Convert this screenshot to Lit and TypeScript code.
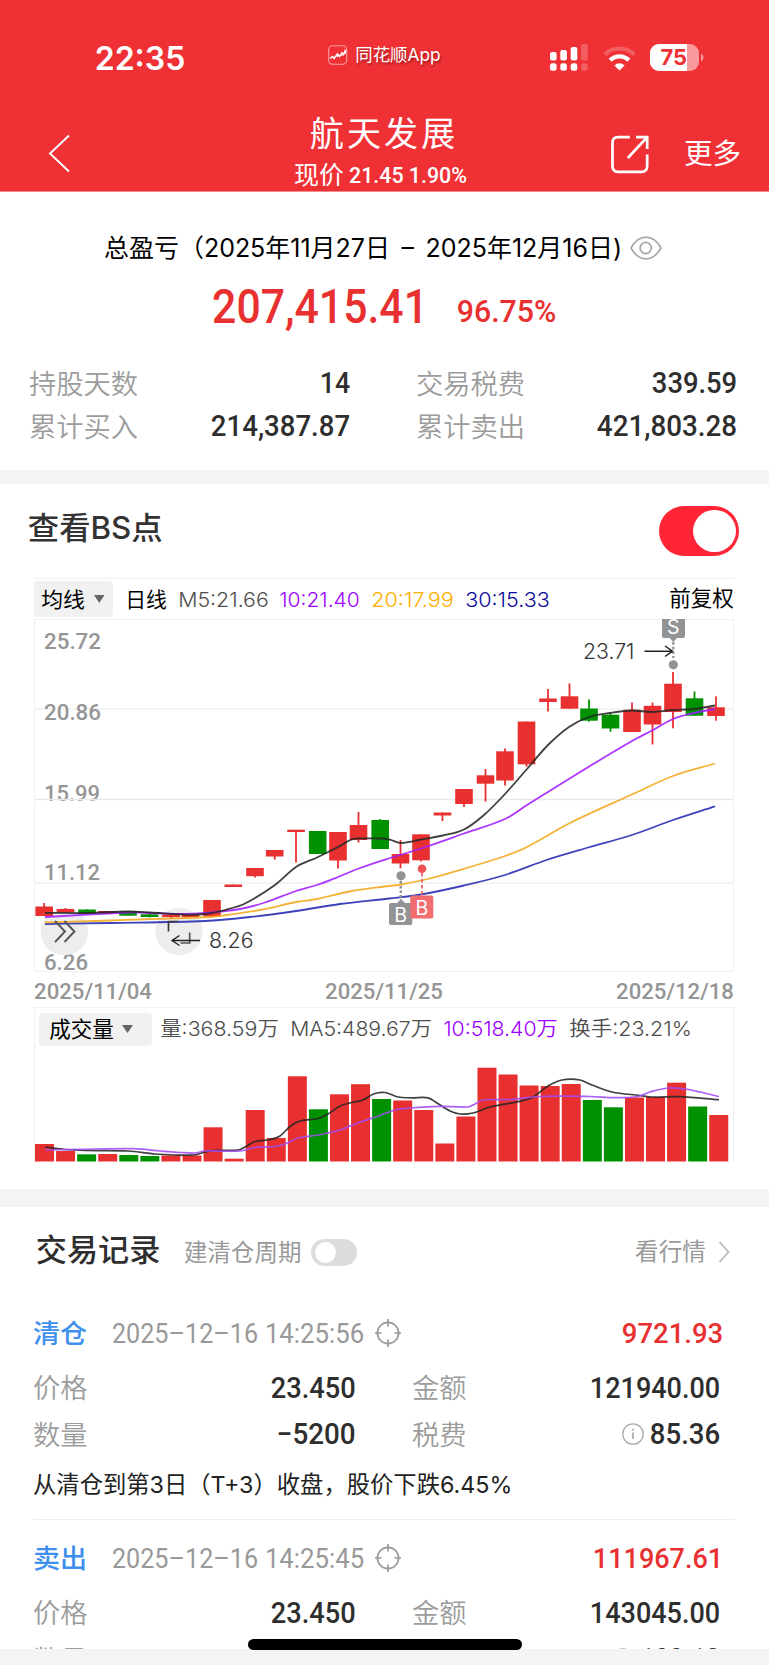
import { LitElement, html, svg, css, nothing } from "lit";
import { customElement, property } from "lit/decorators.js";

const RED = "#e93030";
const GREEN = "#009100";

/** A single line of text set to an exact measure. */
@customElement("fit-text")
class FitText extends LitElement {
  @property() text = "";
  @property({ type: Number }) w = 0;
  @property({ type: Number }) s = 16;
  @property() fit = "spacingAndGlyphs";
  static styles = css`
    :host { display: block; flex: none; }
    svg { display: block; overflow: visible; }
    text { fill: currentColor; font-size: var(--size); white-space: pre; }
  `;
  render() {
    const b = this.s * 0.04;
    const h = Math.round(this.s * 1.2);
    return html`<svg width=${this.w} height=${h} style="--size:${this.s}px">
      ${svg`<text x=${-b} y=${h / 2 + this.s * 0.357} textLength=${this.w + 2 * b} lengthAdjust=${this.fit}>${this.text}</text>`}
    </svg>`;
  }
}

const tx = (text: string, w: number, s: number, cls = "", fit = "spacingAndGlyphs") =>
  html`<fit-text class=${cls} .text=${text} .w=${w} .s=${s} .fit=${fit}></fit-text>`;

type Pt = [number, number];

/** Catmull-Rom spline through the given points. */
function curve(p: Pt[]): string {
  let d = `M${p[0][0]},${p[0][1]}`;
  for (let i = 0; i < p.length - 1; i++) {
    const a = p[Math.max(0, i - 1)], b = p[i], c = p[i + 1], e = p[Math.min(p.length - 1, i + 2)];
    const l = (c[0] - b[0]) / 3;
    const m1 = (c[1] - a[1]) / (c[0] - a[0] || 1);
    const m2 = (e[1] - b[1]) / (e[0] - b[0] || 1);
    d += `C${b[0] + l},${b[1] + m1 * l} ${c[0] - l},${c[1] - m2 * l} ${c[0]},${c[1]}`;
  }
  return d;
}

// centre x, body top, body bottom, wick high, wick low, colour
const CANDLES: [number, number, number, number, number, number][] = [
  [44.2, 906.5, 916, 903, 916, 1], [65.5, 909, 912.5, 908, 913, 1], [87, 909.5, 913.5, 909.5, 913.5, 0],
  [107, 911, 913.5, 911, 914, 1], [128, 911, 915.7, 911, 915.7, 0], [149.5, 914.3, 917, 914, 917.5, 0],
  [171, 914.5, 917, 914, 918.5, 1], [190.5, 915, 917, 915, 917, 1], [212, 900, 916.5, 900, 916.5, 1],
  [233.3, 884.5, 887, 884.5, 887, 1], [255, 868, 876.2, 868, 877.5, 1], [274.7, 850, 856.5, 850, 859.7, 1],
  [296, 829.7, 832, 829.7, 862.5, 1], [317.7, 831, 854, 831, 854, 0], [338, 832, 860.5, 832, 868.5, 1],
  [358.5, 825, 840, 812, 842.5, 1], [380.2, 820, 849, 819, 849, 0], [400.5, 854, 863.5, 840, 868.3, 1],
  [421, 834.3, 860.3, 834.3, 861.5, 1], [442.5, 812.5, 815.5, 812.5, 821, 1], [464, 789, 804, 789, 807, 1],
  [485.5, 775.3, 783.7, 769, 801.5, 1], [505, 751.3, 780.5, 748.5, 785.5, 1], [526.5, 721.5, 764.3, 721.5, 766.7, 1],
  [548, 698.5, 702, 689, 711.5, 1], [569.5, 696.3, 708.7, 683.5, 708.7, 1], [589, 708.5, 720.7, 699.5, 721.7, 0],
  [610.5, 714.7, 728.5, 713.5, 731.7, 0], [632, 709.7, 732, 702.5, 732, 1], [652.5, 705.8, 724.5, 702.5, 744.5, 1],
  [673, 683.7, 712, 672, 728.3, 1], [694.5, 698.3, 715.7, 691.5, 715.7, 0], [716, 707.3, 716, 696.3, 720.7, 1],
];

const MA: [string, Pt[]][] = [
  ["#2229b0", [[45, 924], [110, 923], [205, 921], [250, 917], [296, 911], [340, 904], [389, 898.5], [421, 894.5], [464, 885.5], [505, 875], [548, 859.5], [590, 847], [632, 835], [673, 820], [715, 806.3]]],
  ["#f2a81d", [[45, 922.5], [110, 920.5], [185, 918], [215, 916.5], [260, 910], [296, 902], [317, 899], [352, 891], [389, 886], [401, 884.5], [430, 878.5], [470, 867], [505, 856], [527, 847], [570, 823], [632, 794.5], [673, 776], [715, 763.5]]],
  ["#a11cff", [[45, 917], [87, 914.7], [128, 912.5], [150, 913], [185, 914], [205, 913], [240, 909], [265, 902.5], [296, 891], [317, 885], [338, 877], [360, 868], [390, 858], [421, 848.5], [464, 833.5], [505, 819], [527, 805], [548, 792], [590, 766], [632, 741], [652, 730.5], [673, 719], [694, 713], [715, 709]]],
  ["#262626", [[45, 912.8], [87, 913], [128, 911.5], [150, 912.5], [185, 914.7], [205, 914], [225, 910], [245, 903.5], [275, 885], [296, 867], [317, 857.5], [338, 847], [352, 839.3], [365, 838.5], [383, 838.5], [391, 840], [401, 843], [421, 839.5], [443, 835.5], [464, 829.5], [484, 815], [505, 794], [527, 769], [548, 745], [569, 727], [589, 717], [610, 713], [632, 710.5], [652, 712], [673, 710], [694, 709], [715, 705.5]]],
];

const VOL: [number, number][] = [
  [1144, 1], [1151, 1], [1154.3, 0], [1154, 1], [1155, 0], [1156, 0], [1155.5, 1], [1155.5, 1], [1127.3, 1], [1158.7, 1], [1110, 1],
  [1138, 1], [1076.3, 1], [1109.3, 0], [1094.3, 1], [1084.2, 1], [1099, 0], [1100.5, 1], [1110, 1], [1143.5, 1], [1116.5, 1], [1067.7, 1],
  [1074.5, 1], [1085.5, 1], [1086, 1], [1084, 1], [1100, 0], [1107.3, 0], [1097.5, 1], [1097, 1], [1082.7, 1], [1106.5, 0], [1115, 1],
];

const VMA: [string, Pt[]][] = [
  ["#262626", [[45, 1147], [65, 1149.5], [85, 1150.5], [128, 1151], [155, 1154], [175, 1155], [194, 1155], [202, 1153], [212, 1150.5], [238, 1150], [245, 1147], [255, 1141.5], [270, 1139.5], [280, 1136], [290, 1126.5], [300, 1121], [318, 1118.5], [328, 1114], [340, 1106], [352, 1102.5], [363, 1100], [374, 1093.8], [385, 1092.5], [398, 1097], [412, 1097.8], [428, 1097.8], [437, 1103], [450, 1111], [460, 1114], [473, 1113], [490, 1107], [530, 1098.5], [548, 1086], [562, 1080], [580, 1080], [592, 1085], [612, 1092], [640, 1095.5], [652, 1097], [680, 1096.7], [719, 1099.7]]],
  ["#a14bf2", [[45, 1150], [80, 1149.3], [134, 1148.7], [160, 1151], [180, 1152.5], [195, 1153], [205, 1151], [240, 1151], [255, 1147.5], [275, 1146.5], [285, 1144], [298, 1138], [318, 1135], [340, 1130], [355, 1124], [380, 1115.5], [395, 1110], [410, 1108], [440, 1106.3], [468, 1107], [475, 1104], [483, 1100], [510, 1099.5], [540, 1096.5], [590, 1096.5], [615, 1097.7], [638, 1096.5], [650, 1092], [668, 1088], [685, 1089], [700, 1092], [719, 1096.5]]],
];

const LABELS: [string, number, number][] = [["25.72", 648.7, 55], ["20.86", 720, 55], ["15.99", 800.7, 54], ["11.12", 880.3, 54], ["6.26", 970, 42]];

interface Trade { kind: string; time: string; pnl: string; pnlW: number; amount: string; amountW: number; qty: string; fee: string; feeW: number; note: string; }

const TRADES: Trade[] = [
  { kind: "清仓", time: "14:25:56", pnl: "9721.93", pnlW: 99, amount: "121940.00", amountW: 128, qty: "−5200", fee: "85.36", feeW: 68, note: "从清仓到第3日（T+3）收盘，股价下跌6.45%" },
  { kind: "卖出", time: "14:25:45", pnl: "111967.61", pnlW: 128, amount: "143045.00", amountW: 128, qty: "−6100", fee: "100.13", feeW: 78, note: "" },
];

@customElement("app-root")
class AppRoot extends LitElement {
  static styles = css`
    :host {
      display: flex; flex-direction: column; position: relative; width: 769px; height: 1665px; overflow: hidden;
      background: #fff; color: #000; font-family: Inter, "Noto Sans CJK SC", sans-serif; font-weight: 400;
    }
    svg { display: block; flex: none; }
    .num { font-family: Roboto, "Noto Sans CJK SC", sans-serif; }
    .med { font-weight: 500; }
    .semi { font-weight: 600; }
    .grey { color: #999; }
    .label-grey { color: #9c9c9c; font-weight: 350; padding-top: 2px; }
    .dark { color: #2e2e2e; }
    .red { color: #e93030; }

    header { background: #ef3136; color: #fff; height: 191px; border-bottom: 1px solid #f68b8e; flex: none; }
    .status { display: flex; align-items: center; height: 115px; padding: 0 65px 0 96px; }
    .app { display: flex; align-items: center; gap: 7.5px; margin-left: 144px; padding-bottom: 6px; text-shadow: 1px 2px 2px rgba(90, 0, 0, .5); }
    .signals { display: flex; align-items: center; margin-left: auto; }
    .wifi { margin: 0 14px 0 15px; }
    .nav { display: grid; grid-template-columns: 295px 1fr 158px; height: 76px; }
    .back { padding: 19px 0 0 47px; }
    .name { margin: -2px 0 0 16px; }
    .price { display: flex; align-items: center; gap: 7px; height: 31px; padding-top: 5px; }
    .actions { display: flex; align-items: center; gap: 36px; padding-top: 2px; }

    .summary { height: 278px; flex: none; }
    .period { display: flex; align-items: center; gap: 9px; height: 40px; padding: 36px 0 0 105px; }
    .profit { display: flex; align-items: center; gap: 32px; height: 60px; padding: 8px 0 0 214px; }
    .profit .pct { padding-top: 10px; }
    .stats { display: grid; grid-template-columns: 319px 319px; column-gap: 68px; grid-auto-rows: 43px; padding: 25px 0 0 30px; }
    .pair { display: flex; justify-content: space-between; align-items: center; }
    .band { background: #f4f4f4; height: 14px; flex: none; }
    .band.wide { height: 18px; }

    .chart { height: 705px; flex: none; }
    .head { display: flex; justify-content: space-between; align-items: center; height: 94px; padding: 0 30px 0 29px; }
    .head .label { color: #333; padding-bottom: 7px; }
    .switch { width: 80.5px; height: 50px; border-radius: 25px; background: #ff2436; display: flex; align-items: center; justify-content: flex-end; padding-right: 3.5px; box-sizing: border-box; }
    .switch i { width: 42.5px; height: 42.5px; border-radius: 50%; background: #fff; }
    .legend { display: flex; align-items: center; height: 40px; margin: 0 35px 0 34px; border-top: 1px solid #f0f0f0; color: #4d4d4d; font-weight: 350; }
    .drop { background: #f1f1f1; border-radius: 4px; display: flex; align-items: center; color: #000; box-sizing: border-box; font-weight: 400; }
    .drop.ma { width: 79px; height: 36px; padding-left: 8px; gap: 10px; margin-right: 13px; }
    .drop.vol { width: 112.5px; height: 33px; padding-left: 11px; gap: 9px; margin: 0 9px 0 4px; }
    .black { color: #000; font-weight: 400; }
    .purple { color: #9d00ff; }
    .orange { color: #ffae00; }
    .navy { color: #0a0a9b; }
    .m1 { margin-left: 13px; } .m2 { margin-left: 12px; }
    .adj { margin-left: auto; padding-bottom: 2px; margin-right: 1px; }
    .dates { display: flex; justify-content: space-between; align-items: center; height: 33px; padding: 2px 36px 0 35px; color: #959595; }
    .volume { margin: 0 35px 0 34px; border: 1px solid #f0f0f0; border-bottom: 0; }
    .volume .row { display: flex; align-items: center; height: 42px; color: #4d4d4d; font-weight: 350; }
    .volume .row > fit-text { padding-bottom: 1px; }

    .records { height: 442px; overflow: hidden; flex: none; }
    .rhead { display: flex; align-items: center; height: 88px; padding: 0 39px 0 37px; }
    .rhead .big { padding-bottom: 4px; }
    .rhead .cycle { margin: 3px 10px 0 26px; }
    .off { width: 46.5px; height: 27px; border-radius: 13.5px; background: #dcdcdc; display: flex; align-items: center; box-sizing: border-box; padding-left: 4px; margin-top: 3px; }
    .off i { width: 21px; height: 21px; border-radius: 50%; background: #fff; }
    .more { display: flex; align-items: center; gap: 13px; margin: 2px 0 0 auto; }
    .trade { padding-top: 13px; }
    .line { display: flex; align-items: center; height: 50px; padding: 0 47px 0 34px; }
    .line .pnl { margin-left: auto; }
    .kind { color: #3f8fee; margin-right: 27px; padding-top: 1px; }
    .time { display: flex; gap: 9px; margin-right: 12px; padding-top: 1px; }
    .cells { display: grid; grid-template-columns: 320.5px 306px; column-gap: 58.5px; padding-left: 34px; grid-template-rows: 58px 35px; }
    .fee { display: flex; align-items: center; gap: 7px; }
    .note { display: flex; align-items: center; margin: 0 34px 0 33px; border-bottom: 1.5px solid #ededed; color: #222; box-sizing: border-box; height: 69px; padding-left: 1px; }
    .foot { background: #f4f4f4; height: 16px; flex: none; }
    .home { position: absolute; left: 248px; top: 1639px; width: 273.5px; height: 10.5px; border-radius: 6px; background: #000; }
    text { fill: currentColor; }
  `;

  tri(w: number, h: number) {
    return html`<svg width=${w} height=${h}><path d="M0 0H${w}L${w / 2} ${h}z" fill="#666" /></svg>`;
  }

  header() {
    return html`<header>
      <div class="status">
        ${tx("22:35", 88, 33, "semi")}
        <div class="app">
          <svg width="20" height="20" viewBox="0 0 20 20" fill="none">
            <rect x=".7" y=".7" width="18" height="18.6" rx="4" stroke="#f8a0a2" stroke-width="1.1" />
            <path d="M2 13.5L4.5 11.5L6 13.5L9.5 9L11.5 11.5L14 8L15.5 9.5L18 5.5" stroke="#fff" stroke-width="1.5" />
            <path d="M9.500 8V12M14 7V11M17 4.500V9" stroke="#fff" stroke-width="1.200" />
          </svg>
          ${tx("同花顺App", 84, 17.5)}
        </div>
        <div class="signals">
          <svg width="38" height="28" viewBox="0 0 38 28" fill="#fff">
            <rect x="0" y="8" width="6.6" height="8.4" rx="2" /><rect x="10.3" y="6" width="6.6" height="10.4" rx="2" /><rect x="20.7" y="3" width="6.6" height="13.4" rx="2" />
            <rect x="0" y="19.2" width="6.6" height="7.6" rx="2.4" /><rect x="10.3" y="19.2" width="6.6" height="7.6" rx="2.4" /><rect x="20.7" y="19.2" width="6.6" height="7.6" rx="2.4" />
            <g opacity=".22"><rect x="31.1" y="0" width="6.6" height="16.4" rx="2" /><rect x="31.1" y="19.2" width="6.6" height="7.6" rx="2.4" /></g>
          </svg>
          <svg class="wifi" width="33" height="26" viewBox="0 0 33 26" fill="none">
            <path d="M1.8 9.500A21 21 0 0 1 31.2 9.500" stroke="#fff" stroke-opacity=".22" stroke-width="4.200" />
            <path d="M7.2 15.200A13 13 0 0 1 25.8 15.200" stroke="#fff" stroke-width="4.2" />
            <path d="M16.5 25.5L11.4 20.4A7.3 7.3 0 0 1 21.6 20.4z" fill="#fff" />
          </svg>
          <svg width="54" height="28" viewBox="0 0 54 28">
            <defs><clipPath id="bat"><rect width="49" height="27" rx="9" /></clipPath></defs>
            <g clip-path="url(#bat)"><rect width="49" height="27" fill="#f8999b" /><rect width="37" height="27" fill="#fff" /></g>
            <path d="M51 9.5Q53.5 10.5 53.5 13.5T51 17.5z" fill="#f8999b" />
            <text x="10.500" y="21.3" font-size="22" font-weight="700" textLength="26.500" lengthAdjust="spacingAndGlyphs" style="fill:#ef3136">75</text>
          </svg>
        </div>
      </div>
      <div class="nav">
        <div class="back"><svg width="24" height="40" viewBox="0 0 24 40" fill="none"><path d="M22 1.5L3 19.5L22 37.5" stroke="#fff" stroke-width="1.9" /></svg></div>
        <div class="title">
          <div class="name">${tx("航天发展", 143, 34, "", "spacing")}</div>
          <div class="price">${tx("现价", 48, 25)}${tx("21.45 1.90%", 116, 22.5, "num med")}</div>
        </div>
        <div class="actions">
          <svg width="38" height="39" viewBox="0 0 38 39" fill="none" stroke="#fff" stroke-width="2.7">
            <path d="M18.8 2.2H7Q1.5 2.2 1.5 8V31Q1.5 36.8 7 36.8H30.5Q36.2 36.8 36.2 31V19.5" />
            <path d="M25 2.2H36.2V14" /><path d="M36.2 2.2L16.8 23" />
          </svg>
          ${tx("更多", 55, 28)}
        </div>
      </div>
    </header>`;
  }

  summary() {
    const pair = (a: string, b: string, w: number) =>
      html`<div class="pair">${tx(a, 107, 27, "label-grey")}${tx(b, w, 29, "num dark med")}</div>`;
    return html`<section class="summary">
      <div class="period">
        ${tx("总盈亏（2025年11月27日 \u2009–\u2009 2025年12月16日)", 516, 25)}
        <svg width="32" height="24" viewBox="0 0 32 24" fill="none" stroke="#aaa" stroke-width="1.8">
          <path d="M1 12Q7 1.2 16 1.2T31 12Q25 22.8 16 22.8T1 12z" /><circle cx="15.7" cy="12" r="5.6" />
        </svg>
      </div>
      <div class="profit">${tx("207,415.41", 212, 48, "num red med")}<div class="pct">${tx("96.75%", 97, 31.5, "num red med")}</div></div>
      <div class="stats">
        ${pair("持股天数", "14", 28)}${pair("交易税费", "339.59", 83)}
        ${pair("累计买入", "214,387.87", 137)}${pair("累计卖出", "421,803.28", 138)}
      </div>
    </section>`;
  }

  kline() {
    return html`<svg width="769" height="353" viewBox="0 619 769 353">
      <g stroke="#f1f1f1" stroke-width="1" fill="none">
        <rect x="34.5" y="619.5" width="699" height="352" />
        <path d="M35 709H733M35 883H733" stroke-width="1.3" />
      </g>
      <g class="num" style="color:#959595" font-size="22.5" font-weight="500">
        ${LABELS.map(([t, y, w]) => svg`<text x="44" y=${y} textLength=${w + 2} lengthAdjust="spacingAndGlyphs">${t}</text>`)}
      </g>
      <path d="M35 799.5H733" stroke="#e9e9e9" stroke-width="1.3" />
      <circle cx="64.3" cy="931.5" r="23.7" fill="#ededed" /><circle cx="179" cy="931.5" r="23.7" fill="#ededed" />
      ${CANDLES.map(([x, t, b, h, l, up]) => {
        const c = up ? RED : GREEN;
        return svg`<rect x=${x - 8.8} y=${t} width="17.6" height=${b - t} fill=${c} /><rect x=${x - 0.9} y=${h} width="1.8" height=${l - h} fill=${c} />`;
      })}
      ${MA.map(([c, p]) => svg`<path d=${curve(p)} fill="none" stroke=${c} stroke-width="1.8" stroke-opacity=".88" />`)}
      <g fill="none" stroke="#555" stroke-width="1.9">
        <path d="M55 921L65 931.5L55 942M64.5 921L74.5 931.5L64.5 942" />
        <path d="M178 921.5H168.5V931.5" stroke="#3c3c3c" stroke-width="1.7" /><path d="M189.7 932.5V943H180.5" stroke="#555" stroke-width="1.7" />
        <path d="M200 940.5H172M179.5 935.5L172 940.5L179.5 945.5" stroke="#222" stroke-width="1.4" />
      </g>
      <g style="color:#333" font-size="21.5" font-weight="350">
        <text x="209" y="947.7" textLength="44.5" lengthAdjust="spacingAndGlyphs">8.26</text>
        <text x="583" y="658.8" textLength="51.5" lengthAdjust="spacingAndGlyphs">23.71</text>
      </g>
      <g fill="#929394" stroke="#929394">
        <g stroke="none">
          <path d="M662 619H685V636Q685 638 683 638H677L673.3 642L669.6 638H664Q662 638 662 636z" />
          <circle cx="673.3" cy="664.8" r="4.6" /><circle cx="401" cy="875.8" r="4.6" />
          <path d="M391 903H397L401 899L405 903H410.3Q412.3 903 412.3 905V923Q412.3 925 410.3 925H391Q389 925 389 923V905Q389 903 391 903z" />
        </g>
        <path d="M673.3 642V658" stroke-width="2.4" stroke-dasharray="2.7 2" /><path d="M400.8 881V900" stroke-width="2.4" stroke-dasharray="2.7 2" />
      </g>
      <path d="M422 873V896" stroke="#f0696d" stroke-width="1.9" stroke-dasharray="3.5 2.5" />
      <circle cx="422" cy="868.7" r="4.3" fill="#ee5055" />
      <rect x="410.3" y="895.5" width="23" height="23" rx="2" fill="#f26d70" />
      <path d="M644.5 651.2H672M665 646L672.5 651.2L665 656.5" fill="none" stroke="#222" stroke-width="1.5" />
      <g style="color:#fff" font-size="19.5" text-anchor="middle">
        <text x="673.3" y="634">S</text><text x="400.7" y="921.5">B</text><text x="422" y="914.5">B</text>
      </g>
    </svg>`;
  }

  chart() {
    return html`<section class="chart">
      <div class="head"><div class="label">${tx("查看BS点", 132.5, 31, "med")}</div><div class="switch"><i></i></div></div>
      <div class="legend">
        <div class="drop ma">${tx("均线", 42, 21)}${this.tri(10.5, 8)}</div>
        ${tx("日线", 40, 21, "black")}
        ${tx("M5:21.66", 89, 20.5, "m1")}${tx("10:21.40", 79, 20.5, "m2 purple")}${tx("20:17.99", 81, 20.5, "m1 orange")}${tx("30:15.33", 83, 20.5, "m1 navy")}
        ${tx("前复权", 63, 21.5, "adj black")}
      </div>
      ${this.kline()}
      <div class="dates">${tx("2025/11/04", 116, 22.5, "num med")}${tx("2025/11/25", 116, 22.5, "num med")}${tx("2025/12/18", 116, 22.5, "num med")}</div>
      <div class="volume">
        <div class="row">
          <div class="drop vol">${tx("成交量", 63, 21.5)}${this.tri(11, 8)}</div>
          ${tx("量:368.59万", 117, 20.5)}${tx("MA5:489.67万", 140, 20.5, "m1")}${tx("10:518.40万", 113, 20.5, "m1 purple")}${tx("换手:23.21%", 121, 20.5, "m1")}
        </div>
        <svg width="698" height="112" viewBox="35 1050 698 112">
          ${VOL.map(([t, up], i) => svg`<rect x=${35 + i * 21.07} y=${t} width="19" height=${1161.5 - t} fill=${up ? RED : GREEN} />`)}
          ${VMA.map(([c, p]) => svg`<path d=${curve(p)} fill="none" stroke=${c} stroke-width="1.7" stroke-opacity=".88" />`)}
        </svg>
      </div>
    </section>`;
  }

  trade(t: Trade) {
    const label = (s: string) => tx(s, 52.5, 27, "label-grey");
    return html`<div class="trade">
      <div class="line">
        ${tx(t.kind, 52, 26.5, "kind med")}
        <div class="time grey">${tx("2025–12–16", 144, 27.5, "num")}${tx(t.time, 97, 27.5, "num")}</div>
        <svg width="26" height="28" viewBox="0 0 26 28" fill="none" stroke="#999" stroke-width="1.7">
          <circle cx="13" cy="14" r="10.6" /><path d="M13 0V7.5M13 20.5V28M0 14H6.500M19.500 14H26" />
        </svg>
        ${tx(t.pnl, t.pnlW, 28.5, "pnl num red med")}
      </div>
      <div class="cells">
        <div class="pair">${label("价格")}${tx("23.450", 82.5, 29, "num dark med")}</div>
        <div class="pair">${label("金额")}${tx(t.amount, t.amountW, 29, "num dark med")}</div>
        <div class="pair">${label("数量")}${tx(t.qty, 76.5, 29, "num dark med")}</div>
        <div class="pair">${label("税费")}
          <div class="fee">
            <svg width="22" height="22" viewBox="0 0 22 22" fill="none" stroke="#aaa" stroke-width="1.3"><circle cx="11" cy="11" r="10.2" /><path d="M11 9.5V16" stroke-width="1.7" /><path d="M11 5.7V7.4" stroke-width="1.9" /></svg>
            ${tx(t.fee, t.feeW, 29, "num dark med")}
          </div>
        </div>
      </div>
      ${t.note ? html`<div class="note">${tx(t.note, 477.5, 23.5)}</div>` : nothing}
    </div>`;
  }

  render() {
    return html`
      ${this.header()}${this.summary()}
      <div class="band"></div>
      ${this.chart()}
      <div class="band wide"></div>
      <section class="records">
        <div class="rhead">
          ${tx("交易记录", 122, 31, "big dark med")}
          ${tx("建清仓周期", 115.5, 23.5, "cycle grey")}
          <div class="off"><i></i></div>
          <div class="more">${tx("看行情", 69, 23.5, "grey")}<svg width="12" height="22" viewBox="0 0 12 22" fill="none"><path d="M1.5 1L10.5 11L1.5 21" stroke="#bbb" stroke-width="1.8" /></svg></div>
        </div>
        ${TRADES.map((t) => this.trade(t))}
      </section>
      <div class="foot"></div>
      <div class="home"></div>`;
  }
}
